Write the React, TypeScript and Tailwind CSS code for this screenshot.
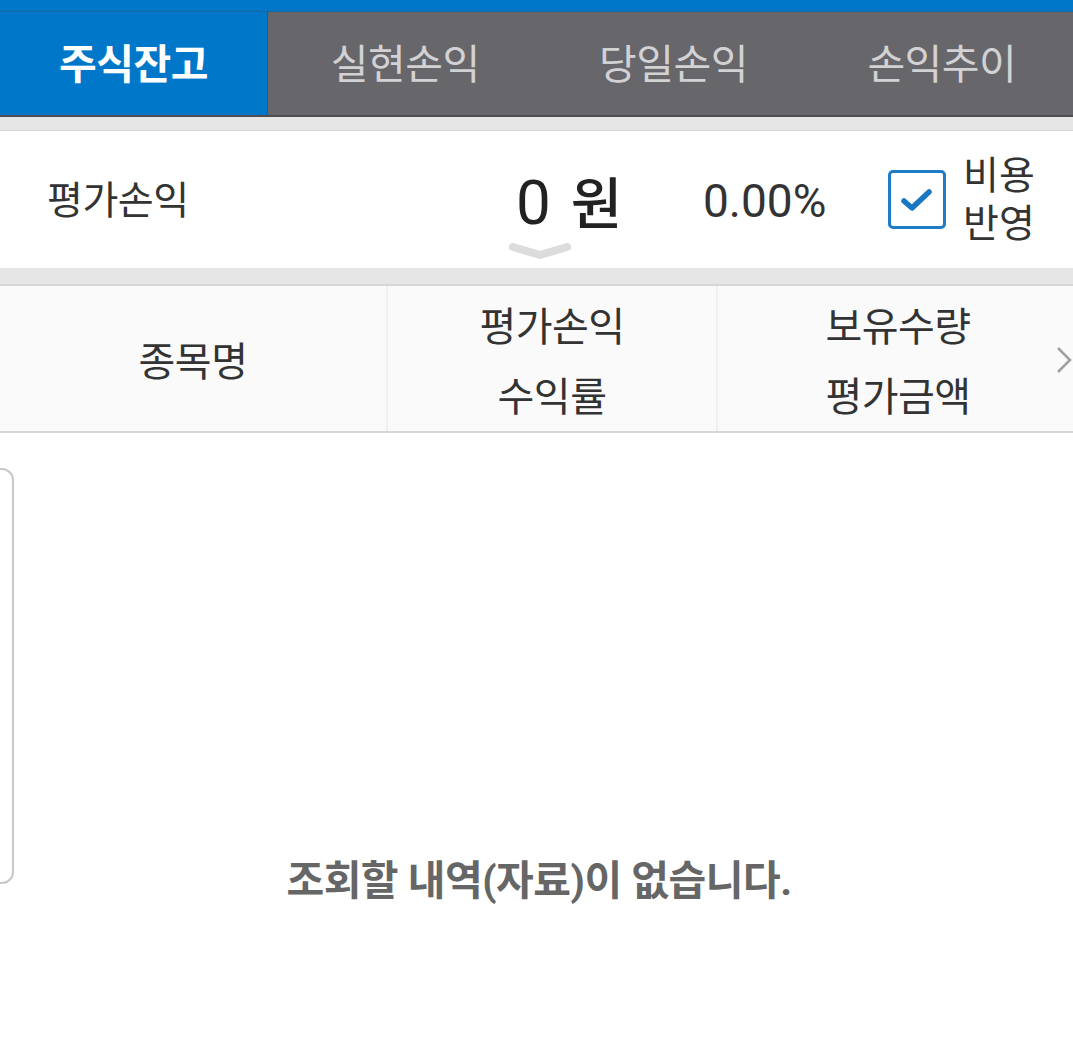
import React from "react";

const font = { fontFamily: 'Roboto, "Noto Sans CJK KR", sans-serif' };

export default function App() {
  const tabs = ["주식잔고", "실현손익", "당일손익", "손익추이"];
  return (
    <div className="w-[1073px] h-[1047px] bg-white overflow-hidden relative" style={font}>
      {/* top blue strip */}
      <div className="h-[12px] bg-[#0077c8] border-b border-[#1565a0]" />
      {/* tabs */}
      <div className="flex h-[105px] bg-[#67666b] border-b-2 border-[#4d4d52]">
        {tabs.map((t, i) => (
          <div
            key={t}
            className={
              i === 0
                ? "w-[268px] flex items-center justify-center bg-[#0077c8] border-r border-[#10609c] text-white font-bold text-[41px] tracking-[-0.5px] pt-[5px]"
                : "flex-1 flex items-center justify-center text-[#d2d2d4] text-[41px] tracking-[-0.5px] pl-[6px] pt-[5px]"
            }
          >
            {t}
          </div>
        ))}
      </div>
      <div className="h-[14px] bg-[#e6e6e6] border-b border-[#d6d6d6]" />
      {/* summary */}
      <div className="h-[137px] flex items-center relative">
        <div className="pl-[47px] text-[39px] text-[#333] w-[516px] tracking-[-0.5px] pt-[4px]">평가손익</div>
        <div className="w-[187px] flex items-baseline text-[#222] pt-[6px]">
          <span className="text-[62px] leading-none">0</span>
          <span className="text-[56px] leading-none ml-[20px] font-medium">원</span>
        </div>
        <div className="w-[185px] text-[46px] text-[#333] pt-[4px]">0.00%</div>
        <div className="w-[58px] h-[59px] rounded-[5px] border-[3px] border-[#1f7cc6] flex items-center justify-center">
          <svg width="38" height="30" viewBox="0 0 38 30">
            <path d="M6 16 L14 23 L31 7" fill="none" stroke="#1a78c2" strokeWidth="5.5" strokeLinecap="round" strokeLinejoin="round" />
          </svg>
        </div>
        <div className="ml-[17px] text-[39px] leading-[48px] text-[#333]">
          <div>비용</div>
          <div>반영</div>
        </div>
        <svg className="absolute left-[508px] top-[110px]" width="64" height="20" viewBox="0 0 64 20">
          <path d="M5 6 L32 14 L59 6" fill="none" stroke="#dcdcdc" strokeWidth="8" strokeLinecap="round" strokeLinejoin="round" />
        </svg>
      </div>
      <div className="h-[18px] bg-[#e6e6e6] border-b-2 border-[#d6d6d6]" />
      {/* header */}
      <div className="h-[147px] flex bg-[#fafafa] border-b-2 border-[#d6d6d6] text-[40px] text-[#333] relative tracking-[-0.5px]">
        <div className="w-[388px] flex items-center justify-center border-r-2 border-[#f0f0f0] pt-[8px]">종목명</div>
        <div className="w-[330px] flex flex-col items-center justify-center border-r-2 border-[#f0f0f0] leading-[70px] pt-[8px]">
          <div>평가손익</div>
          <div>수익률</div>
        </div>
        <div className="flex-1 flex flex-col items-center justify-center leading-[70px] pl-[5px] pt-[8px]">
          <div>보유수량</div>
          <div>평가금액</div>
        </div>
        <svg className="absolute right-0 top-[59px]" width="18" height="30" viewBox="0 0 18 30">
          <path d="M3 3 L15 15 L3 27" fill="none" stroke="#a0a0a0" strokeWidth="2.5" />
        </svg>
      </div>
      {/* empty area */}
      <div className="relative h-[600px]">
        <div className="absolute left-[-20px] top-[35px] w-[34px] h-[416px] rounded-[12px] border-2 border-[#c8c8c8]" />
        <div className="pt-[418px] text-center font-bold text-[41px] text-[#666] pl-[5px] tracking-[-0.5px]">
          조회할 내역(자료)이 없습니다.
        </div>
      </div>
    </div>
  );
}
